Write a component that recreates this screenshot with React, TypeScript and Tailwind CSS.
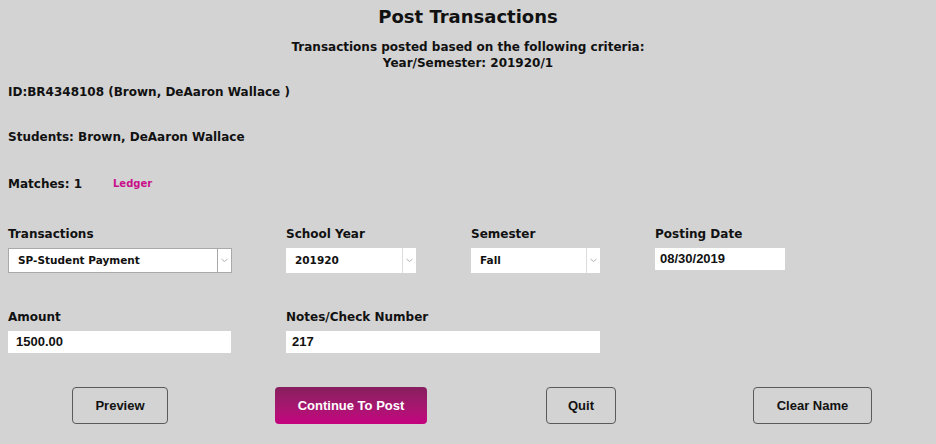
import { ReactNode } from 'react';

const gothic = "font-['DejaVu_Sans',sans-serif]";
const arial = "font-['Liberation_Sans',Arial,sans-serif]";

const Chevron = () => (
  <svg width="7" height="5" viewBox="0 0 7 5" className="block">
    <path d="M0.5 1 L3.5 3.5 L6.5 1" fill="none" stroke="#b0b0b0" strokeWidth="1" />
  </svg>
);

interface SelectProps {
  value: string;
  width: string;
  bordered?: boolean;
}

const FakeSelect = ({ value, width, bordered }: SelectProps) => (
  <div
    className={`flex h-[25px] items-stretch bg-white ${width} ${
      bordered ? 'border border-[#a9a9a9]' : ''
    }`}
  >
    <div className={`flex flex-1 items-center pl-[9px] text-[10.5px] font-bold text-[#111] ${gothic}`}>
      {value}
    </div>
    <div
      className={`flex w-[14px] items-center justify-center border-l ${
        bordered ? 'border-[#a9a9a9]' : 'border-[#dcdcdc]'
      }`}
    >
      <Chevron />
    </div>
  </div>
);

const Label = ({ children }: { children: ReactNode }) => (
  <div className={`h-[16px] text-[12px] leading-[16px] font-bold text-[#111] ${gothic}`}>{children}</div>
);

const TextBox = ({ value, width, pad }: { value: string; width: string; pad: string }) => (
  <div className={`flex h-[22px] items-center bg-white text-[13px] font-bold text-[#111] ${pad} ${width} ${arial}`}>
    {value}
  </div>
);

const Btn = ({ children, className }: { children: ReactNode; className: string }) => (
  <button
    className={`flex h-[37px] items-center justify-center rounded-[4px] border border-[#5a5a5a] text-[13px] font-bold text-[#111] ${arial} ${className}`}
  >
    {children}
  </button>
);

export default function App() {
  return (
    <div className={`min-h-[444px] w-full bg-[#d3d3d3] px-2 text-[#111] ${gothic}`}>
      <h1 className="pt-[5px] text-center text-[18px] leading-[24px] font-bold">Post Transactions</h1>

      <div className="mt-[10px] text-center text-[12px] leading-[16px] font-bold">
        <div>Transactions posted based on the following criteria:</div>
        <div>Year/Semester: 201920/1</div>
      </div>

      <div className="mt-[13px] text-[12px] leading-[16px] font-bold">ID:BR4348108 (Brown, DeAaron Wallace )</div>
      <div className="mt-[29px] text-[12px] leading-[16px] font-bold">Students: Brown, DeAaron Wallace</div>

      <div className="mt-[31px] flex items-center text-[12px] leading-[16px] font-bold">
        <span className="w-[105px]">Matches: 1</span>
        <span className="text-[10px] text-[#c8108a]">Ledger</span>
      </div>

      {/* first input row */}
      <div className="mt-[34px] flex">
        <div className="w-[278px]">
          <Label>Transactions</Label>
          <div className="mt-[6px]">
            <FakeSelect value="SP-Student Payment" width="w-[224px]" bordered />
          </div>
        </div>
        <div className="w-[185px]">
          <Label>School Year</Label>
          <div className="mt-[6px]">
            <FakeSelect value="201920" width="w-[130px]" />
          </div>
        </div>
        <div className="w-[184px]">
          <Label>Semester</Label>
          <div className="mt-[6px]">
            <FakeSelect value="Fall" width="w-[129px]" />
          </div>
        </div>
        <div>
          <Label>Posting Date</Label>
          <div className="mt-[6px]">
            <TextBox value="08/30/2019" width="w-[130px]" pad="pl-[5px]" />
          </div>
        </div>
      </div>

      {/* second input row */}
      <div className="mt-[36px] flex">
        <div className="w-[278px]">
          <Label>Amount</Label>
          <div className="mt-[6px]">
            <TextBox value="1500.00" width="w-[223px]" pad="pl-[8px]" />
          </div>
        </div>
        <div>
          <Label>Notes/Check Number</Label>
          <div className="mt-[6px]">
            <TextBox value="217" width="w-[314px]" pad="pl-[6px]" />
          </div>
        </div>
      </div>

      {/* actions */}
      <div className="mt-[34px] flex">
        <Btn className="ml-[64px] w-[96px]">Preview</Btn>
        <button
          className={`ml-[107px] flex h-[37px] w-[152px] items-center justify-center rounded-[4px] bg-gradient-to-b from-[#861e5e] to-[#c4007f] text-[13px] font-bold text-white ${arial}`}
        >
          Continue To Post
        </button>
        <Btn className="ml-[119px] w-[70px]">Quit</Btn>
        <Btn className="ml-[137px] w-[119px]">Clear Name</Btn>
      </div>
    </div>
  );
}
